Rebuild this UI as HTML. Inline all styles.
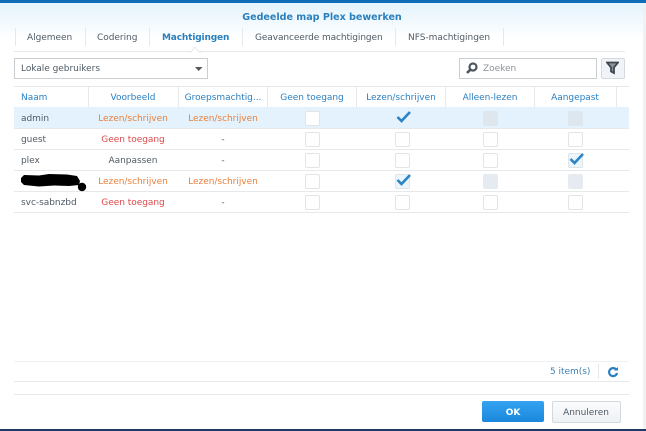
<!DOCTYPE html>
<html><head><meta charset="utf-8"><style>
html,body{margin:0;padding:0;width:646px;height:431px;overflow:hidden;background:#fff}
body{position:relative;font-family:"DejaVu Sans",sans-serif;font-size:9px;color:#4f5b66}
#w{position:absolute;left:0;top:0;width:646px;height:431px;filter:blur(.3px)}
.a,.t,.c,.l{position:absolute}
.t{white-space:nowrap;line-height:12px;letter-spacing:-.03px}
.l{background:#e6e9ec}
.ctr{transform:translateX(-50%)}
.b{color:#2a7fc0}
.o{color:#e8803c}
.r{color:#dc4a4a}
.c{width:13px;height:13px;border:1px solid #e2e5e8;border-radius:2px;background:#fff}
.d{background:#e6ebf1;border-color:#e6ebf1}
.sel{background:#e3f2fd}
</style></head><body><div id="w">
<div class="a" style="left:0;top:0;width:646px;height:3px;background:#0f6cb8"></div>
<div class="a" style="left:0;top:3px;width:643px;height:36px;background:linear-gradient(#e4f3fc,#fff)"></div>
<div class="a" style="left:643px;top:3px;width:3px;height:426px;background:#f1f1f1"></div>
<div class="a" style="left:0;top:429px;width:646px;height:2px;background:#1d3a5f"></div>

<div class="t ctr" style="left:322px;top:12px;font-size:9.6px;font-weight:bold;color:#2a80bd">Gedeelde map Plex bewerken</div>

<div class="l" style="left:14px;top:51px;width:611px;height:1px"></div>
<div class="l" style="left:15px;top:28px;width:1px;height:18px"></div>
<div class="l" style="left:85px;top:28px;width:1px;height:18px"></div>
<div class="l" style="left:149px;top:28px;width:1px;height:18px"></div>
<div class="l" style="left:242px;top:28px;width:1px;height:18px"></div>
<div class="l" style="left:395px;top:28px;width:1px;height:18px"></div>
<div class="l" style="left:503px;top:28px;width:1px;height:18px"></div>
<div class="t" style="left:27px;top:32px">Algemeen</div>
<div class="t" style="left:97px;top:32px">Codering</div>
<div class="t" style="left:162px;top:32px;font-weight:bold;color:#2a80bd;letter-spacing:-.15px">Machtigingen</div>
<div class="t" style="left:255px;top:32px;letter-spacing:-.1px">Geavanceerde machtigingen</div>
<div class="t" style="left:408px;top:32px">NFS-machtigingen</div>
<svg class="a" style="left:188px;top:46px" width="14" height="7"><path d="M0 6H3L7 1L11 6H14" fill="#fff" stroke="#e6e9ec"/></svg>

<div class="a" style="left:14px;top:58px;width:192px;height:19px;border:1px solid #c9ced3;background:#fff"></div>
<div class="t" style="left:21px;top:63px">Lokale gebruikers</div>
<svg class="a" style="left:194px;top:66px" width="10" height="6"><path d="M1 1H8.500L4.700 5Z" fill="#555"/></svg>

<div class="a" style="left:459px;top:58px;width:136px;height:19px;border:1px solid #c9ced3;background:#fff"></div>
<svg class="a" style="left:465px;top:61px" width="14" height="14"><circle cx="8" cy="6" r="3.500" fill="none" stroke="#4d565d" stroke-width="2.200"/><path d="M5.300 8.700L2 12" stroke="#4d565d" stroke-width="2.600"/></svg>
<div class="t" style="left:483px;top:63px;color:#8a939b">Zoeken</div>
<div class="a" style="left:601px;top:58px;width:22px;height:19px;border:1px solid #d3d9df;border-radius:2px;background:#f0f4f8"></div>
<svg class="a" style="left:606px;top:61px" width="13" height="14"><path d="M1 1.500H12L8 6.500V12L5 10.500V6.500Z" fill="#8b9298" stroke="#3f484f" stroke-width="1.800"/></svg>

<div class="l" style="left:14px;top:86px;width:615px;height:1px"></div>
<div class="l" style="left:88px;top:87px;width:1px;height:20px"></div>
<div class="l" style="left:178px;top:87px;width:1px;height:20px"></div>
<div class="l" style="left:267px;top:87px;width:1px;height:20px"></div>
<div class="l" style="left:356px;top:87px;width:1px;height:20px"></div>
<div class="l" style="left:445px;top:87px;width:1px;height:20px"></div>
<div class="l" style="left:534px;top:87px;width:1px;height:20px"></div>
<div class="l" style="left:616px;top:87px;width:1px;height:20px"></div>
<div class="t b" style="left:21px;top:92px">Naam</div>
<div class="t b ctr" style="left:133px;top:92px">Voorbeeld</div>
<div class="t b ctr" style="left:223px;top:92px">Groepsmachtig...</div>
<div class="t b ctr" style="left:312px;top:92px">Geen toegang</div>
<div class="t b ctr" style="left:401px;top:92px">Lezen/schrijven</div>
<div class="t b ctr" style="left:490px;top:92px">Alleen-lezen</div>
<div class="t b ctr" style="left:575px;top:92px">Aangepast</div>

<div class="a sel" style="left:14px;top:107px;width:615px;height:21px"></div>
<div class="l" style="left:14px;top:128px;width:615px;height:1px"></div>
<div class="l" style="left:14px;top:149px;width:615px;height:1px"></div>
<div class="l" style="left:14px;top:170px;width:615px;height:1px"></div>
<div class="l" style="left:14px;top:191px;width:615px;height:1px"></div>
<div class="l" style="left:14px;top:212px;width:615px;height:1px"></div>

<div class="t" style="left:21px;top:113px">admin</div>
<div class="t" style="left:21px;top:134px">guest</div>
<div class="t" style="left:21px;top:155px">plex</div>
<svg class="a" style="left:19px;top:172px" width="68" height="21"><path d="M2 6L5 3L20 3.500L30 2L48 2.500L58 4L61 9L60 13L50 14L35 13.500L20 14.500L5 13L2 10Z" fill="#000"/><circle cx="63" cy="15" r="4.200" fill="#000"/></svg>
<div class="t" style="left:21px;top:197px">svc-sabnzbd</div>

<div class="t o ctr" style="left:133px;top:113px">Lezen/schrijven</div>
<div class="t o ctr" style="left:223px;top:113px">Lezen/schrijven</div>
<div class="t r ctr" style="left:133px;top:134px">Geen toegang</div>
<div class="t ctr" style="left:223px;top:134px">-</div>
<div class="t ctr" style="left:133px;top:155px">Aanpassen</div>
<div class="t ctr" style="left:223px;top:155px">-</div>
<div class="t o ctr" style="left:133px;top:176px">Lezen/schrijven</div>
<div class="t o ctr" style="left:223px;top:176px">Lezen/schrijven</div>
<div class="t r ctr" style="left:133px;top:197px">Geen toegang</div>
<div class="t ctr" style="left:223px;top:197px">-</div>

<div class="c" style="left:305px;top:111px"></div>
<div class="c" style="left:395px;top:111px;background:#e3f2fd;border-color:#e3f2fd"></div>
<div class="c d" style="left:483px;top:111px;background:#dfe7ee;border-color:#dfe7ee"></div>
<div class="c d" style="left:568px;top:111px;background:#dfe7ee;border-color:#dfe7ee"></div>
<div class="c" style="left:305px;top:132px"></div>
<div class="c" style="left:395px;top:132px"></div>
<div class="c" style="left:483px;top:132px"></div>
<div class="c" style="left:568px;top:132px"></div>
<div class="c" style="left:305px;top:153px"></div>
<div class="c" style="left:395px;top:153px"></div>
<div class="c" style="left:483px;top:153px"></div>
<div class="c" style="left:568px;top:153px;background:#eaf5fc"></div>
<div class="c" style="left:305px;top:174px"></div>
<div class="c" style="left:395px;top:174px;background:#eaf5fc"></div>
<div class="c d" style="left:483px;top:174px"></div>
<div class="c d" style="left:568px;top:174px"></div>
<div class="c" style="left:305px;top:195px"></div>
<div class="c" style="left:395px;top:195px"></div>
<div class="c" style="left:483px;top:195px"></div>
<div class="c" style="left:568px;top:195px"></div>

<svg class="a" style="left:396px;top:110px" width="16" height="14"><path d="M1.500 7L5.500 11L14 2" fill="none" stroke="#2a84c6" stroke-width="2.600"/></svg>
<svg class="a" style="left:569px;top:152px" width="16" height="14"><path d="M1.500 7L5.500 11L14 2" fill="none" stroke="#2a84c6" stroke-width="2.600"/></svg>
<svg class="a" style="left:396px;top:173px" width="16" height="14"><path d="M1.500 7L5.500 11L14 2" fill="none" stroke="#2a84c6" stroke-width="2.600"/></svg>

<div class="l" style="left:14px;top:361px;width:615px;height:1px;background:#f0f1f2"></div>
<div class="l" style="left:14px;top:381px;width:615px;height:1px"></div>
<div class="l" style="left:14px;top:394px;width:615px;height:1px"></div>
<div class="t" style="left:550px;top:366px;color:#3f7fb0">5 item(s)</div>
<div class="l" style="left:598px;top:364px;width:1px;height:15px"></div>
<svg class="a" style="left:607px;top:366px" width="12" height="12"><path d="M9.500 4A4 4 0 1 0 10 7" fill="none" stroke="#2a7fc0" stroke-width="2.200"/><path d="M7 4.500H11V1Z" fill="#2a7fc0"/></svg>

<div class="a" style="left:482px;top:401px;width:62px;height:21px;border-radius:2px;background:linear-gradient(#34a3f2,#1b87db)"></div>
<div class="t ctr" style="left:513px;top:407px;color:#fff;font-weight:bold">OK</div>
<div class="a" style="left:552px;top:401px;width:67px;height:20px;border:1px solid #d3d9df;border-radius:2px;background:linear-gradient(#fafbfc,#eef1f4)"></div>
<div class="t ctr" style="left:586px;top:407px">Annuleren</div>
</div></body></html>
